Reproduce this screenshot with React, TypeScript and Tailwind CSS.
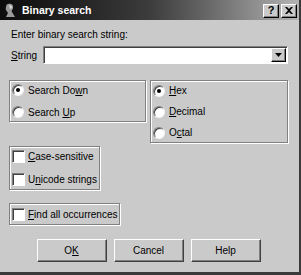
import React from "react";

const U = ({ c }: { c: string }) => <span className="underline underline-offset-[1px]">{c}</span>;

function Radio({ checked, children }: { checked?: boolean; children: React.ReactNode }) {
  return (
    <div className="flex items-center h-[13px]">
      <div className="relative w-[12px] h-[12px] shrink-0 rounded-full bg-white border border-t-[#808080] border-l-[#808080] border-b-[#f4f4f4] border-r-[#f4f4f4] shadow-[inset_1px_1px_0_#404040] flex items-center justify-center">
        {checked && <div className="w-[4px] h-[4px] rounded-full bg-black" />}
      </div>
      <span className="ml-[4px] whitespace-nowrap">{children}</span>
    </div>
  );
}

function Check({ children }: { children: React.ReactNode }) {
  return (
    <div className="flex items-center h-[13px]">
      <div className="w-[13px] h-[13px] shrink-0 bg-white border border-t-[#808080] border-l-[#808080] border-b-white border-r-white shadow-[inset_1px_1px_0_#404040]" />
      <span className="ml-[3px] whitespace-nowrap">{children}</span>
    </div>
  );
}

const group =
  "border border-[#808080] shadow-[inset_1px_1px_0_#ffffff,1px_1px_0_#ffffff]";

function Btn({ children }: { children: React.ReactNode }) {
  return (
    <div className="w-[70px] h-[23px] flex items-center justify-center border border-t-white border-l-white border-r-[#404040] border-b-[#404040] shadow-[inset_-1px_-1px_0_#808080]">
      {children}
    </div>
  );
}

export default function App() {
  return (
    <div
      className="w-[301px] h-[275px] bg-[#cacaca] border-r-2 border-b-[3px] border-[#3a3a3a] text-[10px] leading-[13px] text-black overflow-hidden"
      style={{ fontFamily: "'Liberation Sans', Arial, sans-serif" }}
    >
      {/* title bar */}
      <div className="h-[20px] flex items-center bg-gradient-to-r from-[#0c0c0c] via-[#3c3c3c] to-[#b4b4b4] pl-[3px] pr-[2px]">
        <svg width="15" height="16" viewBox="0 0 15 16" className="shrink-0">
          <path d="M5 2 C8 1 11 3 10 6 C10 8 8 8 9 10 L12 15 L3 15 L5 11 C4 9 2 8 3 5 C3 3 4 2 5 2 Z" fill="#9a9a9a" />
          <path d="M6 3 C8 3 9 4 9 6 L7 7 Z" fill="#d8d8d8" />
        </svg>
        <span className="ml-[4px] text-white font-bold text-[10.5px] whitespace-nowrap">Binary search</span>
        <div className="ml-auto flex gap-[2px] mt-[1px]">
          <div className="w-[16px] h-[14px] bg-[#cacaca] border border-t-white border-l-white border-r-black border-b-black shadow-[inset_-1px_-1px_0_#808080] flex items-center justify-center font-bold text-[11px] leading-none">?</div>
          <div className="w-[16px] h-[14px] bg-[#cacaca] border border-t-white border-l-white border-r-black border-b-black shadow-[inset_-1px_-1px_0_#808080] flex items-center justify-center">
            <svg width="8" height="7" viewBox="0 0 8 7">
              <path d="M0 0 L2 0 L4 2 L6 0 L8 0 L5 3.5 L8 7 L6 7 L4 5 L2 7 L0 7 L3 3.5 Z" fill="black" />
            </svg>
          </div>
        </div>
      </div>

      <div className="pl-[9px] pr-[11px]">
        <div className="mt-[8px] ml-[2px] h-[13px] whitespace-nowrap">Enter binary search string:</div>
        <div className="mt-[5px] h-[18px] flex items-center">
          <span className="ml-[2px] w-[32px]"><U c="S" />tring</span>
          <div className="flex-1 h-[18px] bg-white border border-t-[#808080] border-l-[#808080] border-b-white border-r-white shadow-[inset_1px_1px_0_#404040] flex justify-end items-center pr-[1px]">
            <div className="w-[15px] h-[14px] bg-[#cacaca] border border-t-white border-l-white border-r-black border-b-black shadow-[inset_-1px_-1px_0_#808080] flex items-center justify-center">
              <svg width="7" height="4" viewBox="0 0 7 4"><path d="M0 0 H7 L3.5 4 Z" fill="black" /></svg>
            </div>
          </div>
        </div>

        <div className="mt-[16px] flex gap-[4px]">
          <div className="w-[137px] flex flex-col">
            <div className={`${group} h-[42px] flex flex-col justify-center gap-[9px] pl-[2px]`}>
              <Radio checked>Search Do<U c="w" />n</Radio>
              <Radio><span>Search <U c="U" />p</span></Radio>
            </div>
            <div className={`${group} mt-[24px] w-[91px] h-[44px] flex flex-col justify-center gap-[10px] pl-[2px]`}>
              <Check><U c="C" />ase-sensitive</Check>
              <Check>U<U c="n" />icode strings</Check>
            </div>
            <div className={`${group} mt-[13px] w-[111px] h-[22px] flex flex-col justify-center pl-[2px]`}>
              <Check><U c="F" />ind all occurrences</Check>
            </div>
          </div>
          <div className={`${group} w-[138px] h-[63px] flex flex-col justify-center gap-[8px] pl-[2px] self-start`}>
            <Radio checked><U c="H" />ex</Radio>
            <Radio><U c="D" />ecimal</Radio>
            <Radio>O<U c="c" />tal</Radio>
          </div>
        </div>

        <div className="mt-[14px] flex justify-center gap-[7px]">
          <Btn>O<U c="K" /></Btn>
          <Btn>Cancel</Btn>
          <Btn>Help</Btn>
        </div>
      </div>
    </div>
  );
}
